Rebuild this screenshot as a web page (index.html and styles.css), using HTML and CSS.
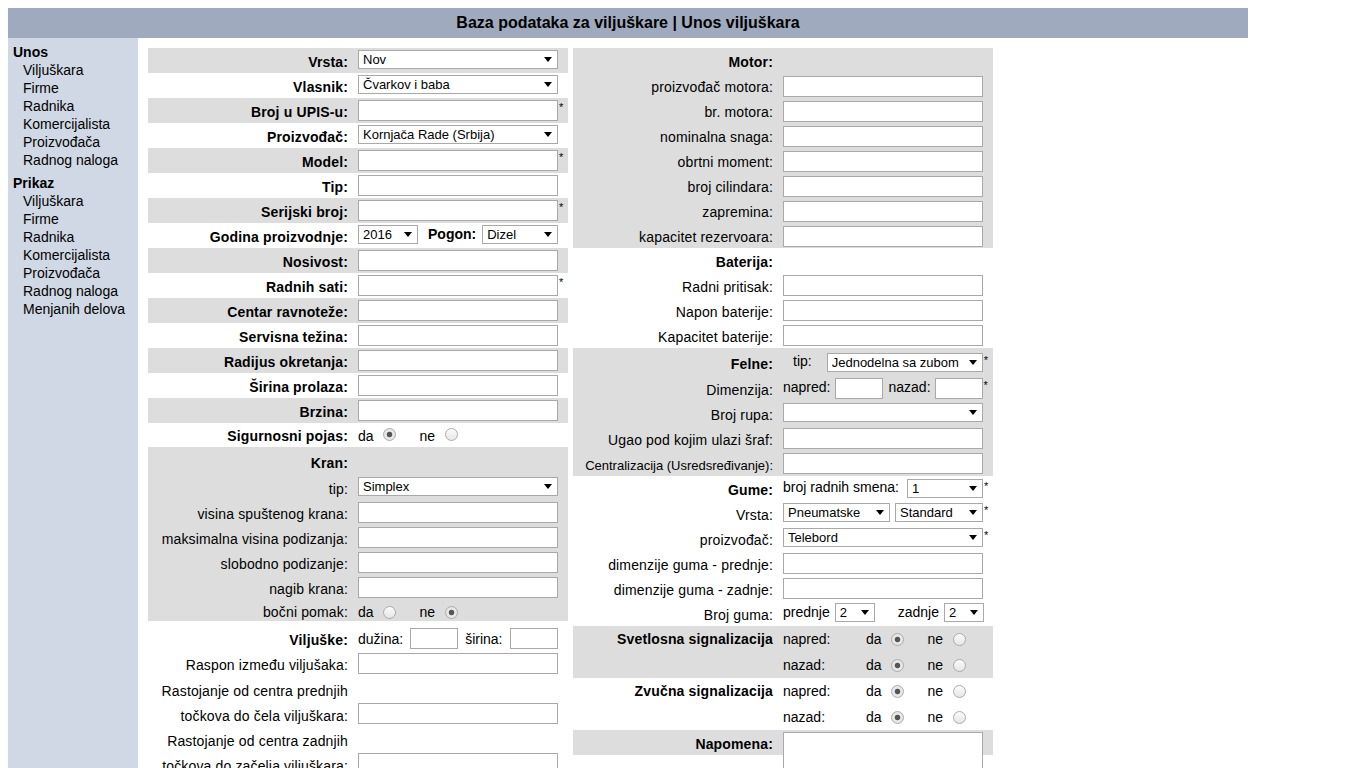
FILE: index.html
```html
<!DOCTYPE html>
<html lang="sr">
<head>
<meta charset="utf-8">
<title>Baza podataka za viljuškare | Unos viljuškara</title>
<link rel="stylesheet" href="styles.css">
</head>
<body>
<div class="page">
  <h1 class="title">Baza podataka za viljuškare | Unos viljuškara</h1>
  <div class="main">
    <nav class="side">
      <h3>Unos</h3>
      <ul>
        <li><a href="#">Viljuškara</a></li>
        <li><a href="#">Firme</a></li>
        <li><a href="#">Radnika</a></li>
        <li><a href="#">Komercijalista</a></li>
        <li><a href="#">Proizvođača</a></li>
        <li><a href="#">Radnog naloga</a></li>
      </ul>
      <h3>Prikaz</h3>
      <ul>
        <li><a href="#">Viljuškara</a></li>
        <li><a href="#">Firme</a></li>
        <li><a href="#">Radnika</a></li>
        <li><a href="#">Komercijalista</a></li>
        <li><a href="#">Proizvođača</a></li>
        <li><a href="#">Radnog naloga</a></li>
        <li><a href="#">Menjanih delova</a></li>
      </ul>
    </nav>
    <form class="content">
      <div class="col">
        <div class="row g"><div class="lb b">Vrsta:</div><div class="ct"><span class="sel w200"><select><option>Nov</option></select></span></div></div>
        <div class="row"><div class="lb b">Vlasnik:</div><div class="ct"><span class="sel w200"><select><option>Čvarkov i baba</option></select></span></div></div>
        <div class="row g"><div class="lb b">Broj u UPIS-u:</div><div class="ct"><input class="in" type="text"><span class="req">*</span></div></div>
        <div class="row"><div class="lb b">Proizvođač:</div><div class="ct"><span class="sel w200"><select><option>Kornjača Rade (Srbija)</option></select></span></div></div>
        <div class="row g"><div class="lb b">Model:</div><div class="ct"><input class="in" type="text"><span class="req">*</span></div></div>
        <div class="row"><div class="lb b">Tip:</div><div class="ct"><input class="in" type="text"></div></div>
        <div class="row g"><div class="lb b">Serijski broj:</div><div class="ct"><input class="in" type="text"><span class="req">*</span></div></div>
        <div class="row"><div class="lb b">Godina proizvodnje:</div><div class="ct"><span class="sel w60"><select><option>2016</option></select></span><span class="t b ml10">Pogon:</span><span class="sel w76 ml6"><select><option>Dizel</option></select></span></div></div>
        <div class="row g"><div class="lb b">Nosivost:</div><div class="ct"><input class="in" type="text"></div></div>
        <div class="row"><div class="lb b">Radnih sati:</div><div class="ct"><input class="in" type="text"><span class="req">*</span></div></div>
        <div class="row g"><div class="lb b">Centar ravnoteže:</div><div class="ct"><input class="in" type="text"></div></div>
        <div class="row"><div class="lb b">Servisna težina:</div><div class="ct"><input class="in" type="text"></div></div>
        <div class="row g"><div class="lb b">Radijus okretanja:</div><div class="ct"><input class="in" type="text"></div></div>
        <div class="row"><div class="lb b">Širina prolaza:</div><div class="ct"><input class="in" type="text"></div></div>
        <div class="row g"><div class="lb b">Brzina:</div><div class="ct"><input class="in" type="text"></div></div>
        <div class="row h24 rad"><div class="lb b">Sigurnosni pojas:</div><div class="ct"><span class="t">da</span><input class="rb" type="radio" name="pojas" checked><span class="t ne">ne</span><input class="rb rb2" type="radio" name="pojas"></div></div>

        <div class="grp g">
          <div class="row h28 kran"><div class="lb b">Kran:</div></div>
          <div class="row"><div class="lb">tip:</div><div class="ct"><span class="sel w200"><select><option>Simplex</option></select></span></div></div>
          <div class="row"><div class="lb">visina spuštenog krana:</div><div class="ct"><input class="in" type="text"></div></div>
          <div class="row"><div class="lb">maksimalna visina podizanja:</div><div class="ct"><input class="in" type="text"></div></div>
          <div class="row"><div class="lb">slobodno podizanje:</div><div class="ct"><input class="in" type="text"></div></div>
          <div class="row"><div class="lb">nagib krana:</div><div class="ct"><input class="in" type="text"></div></div>
          <div class="row h21 rad"><div class="lb">bočni pomak:</div><div class="ct"><span class="t">da</span><input class="rb" type="radio" name="pomak"><span class="t ne">ne</span><input class="rb rb2" type="radio" name="pomak" checked></div></div>
        </div>

        <div class="grp">
          <div class="row h30 vilj"><div class="lb b">Viljuške:</div><div class="ct"><span class="t">dužina:</span><input class="in w48 ml7" type="text"><span class="t ml7">širina:</span><input class="in w48 ml7" type="text"></div></div>
          <div class="row h27"><div class="lb">Raspon između viljušaka:</div><div class="ct"><input class="in" type="text"></div></div>
          <div class="row h50 two"><div class="lb">Rastojanje od centra prednjih<br>točkova do čela viljuškara:</div><div class="ct"><input class="in" type="text"></div></div>
          <div class="row h50 two"><div class="lb">Rastojanje od centra zadnjih<br>točkova do začelja viljuškara:</div><div class="ct"><input class="in" type="text"></div></div>
          <div class="row"><div class="lb">Debljina viljuški:</div><div class="ct"><input class="in" type="text"></div></div>
        </div>
        <div class="grp g">
          <div class="row"><div class="lb b">Dimenzije:</div></div>
          <div class="row"><div class="lb">dužina:</div><div class="ct"><input class="in" type="text"></div></div>
          <div class="row"><div class="lb">širina:</div><div class="ct"><input class="in" type="text"></div></div>
          <div class="row"><div class="lb">visina:</div><div class="ct"><input class="in" type="text"></div></div>
        </div>
      </div>

      <div class="col">
        <div class="grp g motor">
          <div class="row"><div class="lb b">Motor:</div></div>
          <div class="row"><div class="lb">proizvođač motora:</div><div class="ct"><input class="in" type="text"></div></div>
          <div class="row"><div class="lb">br. motora:</div><div class="ct"><input class="in" type="text"></div></div>
          <div class="row"><div class="lb">nominalna snaga:</div><div class="ct"><input class="in" type="text"></div></div>
          <div class="row"><div class="lb">obrtni moment:</div><div class="ct"><input class="in" type="text"></div></div>
          <div class="row"><div class="lb">broj cilindara:</div><div class="ct"><input class="in" type="text"></div></div>
          <div class="row"><div class="lb">zapremina:</div><div class="ct"><input class="in" type="text"></div></div>
          <div class="row"><div class="lb">kapacitet rezervoara:</div><div class="ct"><input class="in" type="text"></div></div>
        </div>
        <div class="grp">
          <div class="row"><div class="lb b">Baterija:</div></div>
          <div class="row"><div class="lb">Radni pritisak:</div><div class="ct"><input class="in" type="text"></div></div>
          <div class="row"><div class="lb">Napon baterije:</div><div class="ct"><input class="in" type="text"></div></div>
          <div class="row"><div class="lb">Kapacitet baterije:</div><div class="ct"><input class="in" type="text"></div></div>
        </div>
        <div class="grp g">
          <div class="row h28 felne"><div class="lb b">Felne:</div><div class="ct"><span class="t ml10">tip:</span><span class="sel w156 ml15"><select><option>Jednodelna sa zubom</option></select></span><span class="req">*</span></div></div>
          <div class="row"><div class="lb">Dimenzija:</div><div class="ct"><span class="t">napred:</span><input class="in w48 ml5" type="text"><span class="t ml5">nazad:</span><input class="in w48 ml4" type="text"><span class="req">*</span></div></div>
          <div class="row"><div class="lb">Broj rupa:</div><div class="ct"><span class="sel w200"><select><option></option></select></span></div></div>
          <div class="row"><div class="lb">Ugao pod kojim ulazi šraf:</div><div class="ct"><input class="in" type="text"></div></div>
          <div class="row"><div class="lb sm">Centralizacija (Usredsređivanje):</div><div class="ct"><input class="in" type="text"></div></div>
        </div>
        <div class="grp">
          <div class="row gume"><div class="lb b">Gume:</div><div class="ct"><span class="t">broj radnih smena:</span><span class="sel w76 ml8"><select><option>1</option></select></span><span class="req">*</span></div></div>
          <div class="row"><div class="lb">Vrsta:</div><div class="ct"><span class="sel w107"><select><option>Pneumatske</option></select></span><span class="sel w88 ml5"><select><option>Standard</option></select></span><span class="req">*</span></div></div>
          <div class="row"><div class="lb">proizvođač:</div><div class="ct"><span class="sel w200"><select><option>Telebord</option></select></span><span class="req">*</span></div></div>
          <div class="row"><div class="lb">dimenzije guma - prednje:</div><div class="ct"><input class="in" type="text"></div></div>
          <div class="row"><div class="lb">dimenzije guma - zadnje:</div><div class="ct"><input class="in" type="text"></div></div>
          <div class="row"><div class="lb">Broj guma:</div><div class="ct"><span class="t">prednje</span><span class="sel w40 ml5"><select><option>2</option></select></span><span class="t ml23">zadnje</span><span class="sel w40 ml5"><select><option>2</option></select></span></div></div>
        </div>
        <div class="grp g">
          <div class="row h26 rad2"><div class="lb b">Svetlosna signalizacija</div><div class="ct"><span class="t k">napred:</span><span class="t">da</span><input class="rb" type="radio" name="sv1" checked><span class="t ne">ne</span><input class="rb rb2" type="radio" name="sv1"></div></div>
          <div class="row h26 rad2"><div class="lb"></div><div class="ct"><span class="t k">nazad:</span><span class="t">da</span><input class="rb" type="radio" name="sv2" checked><span class="t ne">ne</span><input class="rb rb2" type="radio" name="sv2"></div></div>
        </div>
        <div class="grp">
          <div class="row h26 rad2"><div class="lb b">Zvučna signalizacija</div><div class="ct"><span class="t k">napred:</span><span class="t">da</span><input class="rb" type="radio" name="zv1" checked><span class="t ne">ne</span><input class="rb rb2" type="radio" name="zv1"></div></div>
          <div class="row h26 rad2"><div class="lb"></div><div class="ct"><span class="t k">nazad:</span><span class="t">da</span><input class="rb" type="radio" name="zv2" checked><span class="t ne">ne</span><input class="rb rb2" type="radio" name="zv2"></div></div>
        </div>
        <div class="grp g">
          <div class="row napomena"><div class="lb b">Napomena:</div><div class="ct"><textarea class="ta"></textarea></div></div>
        </div>
      </div>
    </form>
  </div>
</div>
</body>
</html>
```

FILE: styles.css
```css
* { box-sizing: border-box; }

html::-webkit-scrollbar { width: 17px; background: #f1f1f1; }
html::-webkit-scrollbar-thumb { background: #c1c1c1; border: 2px solid #f1f1f1; border-top-width: 0; border-bottom-width: 0; }
html::-webkit-scrollbar-button:single-button { height: 17px; background: #f1f1f1; display: block; }

body {
  margin: 8px;
  font-family: "Liberation Sans", Arial, sans-serif;
  font-size: 14px;
  color: #000;
  background: #fff;
}

.page { width: 1240px; }

.title {
  margin: 0;
  height: 30px;
  line-height: 29px;
  background: #a0aabf;
  text-align: center;
  font-size: 16px;
  font-weight: bold;
}

.main { display: flex; align-items: stretch; }

.side {
  width: 130px;
  flex: none;
  background: #d0d8e5;
  padding-top: 5px;
  line-height: 18px;
}
.side h3 { margin: 0; padding-left: 5px; font-size: 14px; font-weight: bold; }
.side ul { list-style: none; margin: 0 0 5px; padding: 0 0 0 15px; }
.side a { color: #000; text-decoration: none; }

.content {
  flex: 1;
  display: flex;
  align-items: flex-start;
  gap: 5px;
  padding: 10px;
  min-height: 1244px;
}

.col { width: 420px; flex: none; }

.g { background: #dddddd; }

.row { display: flex; height: 25px; }
.h21 { height: 21px; }
.h24 { height: 24px; }
.h26 { height: 26px; }
.h27 { height: 27px; }
.h28 { height: 28px; }
.h30 { height: 30px; }
.h50 { height: 50px; }

.lb {
  width: 205px;
  flex: none;
  text-align: right;
  padding: 4px 5px 0 0;
  line-height: 21px;
  white-space: nowrap;
  letter-spacing: 0.15px;
}
.lb.sm { font-size: 13px; letter-spacing: 0; }
.b { font-weight: bold; }

.ct {
  margin-left: 5px;
  display: flex;
  align-items: flex-start;
  padding-top: 2px;
  white-space: nowrap;
}
.motor .ct { padding-top: 3px; }

.t { line-height: 19px; }

.in {
  width: 200px;
  height: 21px;
  margin: 0;
  padding: 1px 3px;
  border: 1px solid #a9a9a9;
  background: #fff;
  font: 13px "Liberation Sans", Arial, sans-serif;
  flex: none;
}
.w48 { width: 48px; }

.ta {
  width: 200px;
  height: 80px;
  margin: 0;
  border: 1px solid #a9a9a9;
  background: #fff;
  font: 13px "Liberation Sans", Arial, sans-serif;
  resize: none;
}

.sel {
  position: relative;
  display: block;
  flex: none;
  height: 19px;
}
.sel select {
  -webkit-appearance: none;
  appearance: none;
  display: block;
  width: 100%;
  height: 19px;
  margin: 0;
  padding: 0 18px 0 4px;
  border: 1px solid #a9a9a9;
  border-radius: 0;
  background: #fff;
  color: #000;
  font: 13px "Liberation Sans", Arial, sans-serif;
  line-height: 17px;
}
.sel::after {
  content: "";
  position: absolute;
  right: 6px;
  top: 7px;
  border-left: 4px solid transparent;
  border-right: 4px solid transparent;
  border-top: 5px solid #000;
  pointer-events: none;
}
.w40 { width: 40px; }
.w60 { width: 60px; }
.w76 { width: 76px; }
.w88 { width: 88px; }
.w107 { width: 107px; }
.w156 { width: 156px; }
.w200 { width: 200px; }

.ml4 { margin-left: 4px; }
.ml5 { margin-left: 5px; }
.ml6 { margin-left: 6px; }
.ml7 { margin-left: 7px; }
.ml8 { margin-left: 8px; }
.ml10 { margin-left: 10px; }
.ml15 { margin-left: 15px; }
.ml23 { margin-left: 23px; }

.req {
  font-size: 11px;
  line-height: 11px;
  margin: 2px 0 0 1px;
}

.rb {
  -webkit-appearance: none;
  appearance: none;
  flex: none;
  width: 13px;
  height: 13px;
  margin: 3px 0 0 9px;
  border: 1px solid #ababab;
  border-radius: 50%;
  background: linear-gradient(#fbfbfb, #e6e6e6);
}
.rb:checked {
  background: radial-gradient(circle, #555 0, #555 2.4px, #e9e9e9 3.2px, #e2e2e2 100%);
}
.rb2 { margin-left: 10px; }
.ne { margin-left: 24px; }

/* radio rows */
.rad .lb { padding-top: 2px; line-height: 22px; }
.rad .t { line-height: 22px; }
.h21.rad .lb { padding-top: 1px; }
.h21.rad .ct { padding-top: 1px; }
.h21.rad .rb { margin-top: 5px; }

.rad2 .lb { padding-top: 2px; line-height: 23px; }
.rad2 .t { line-height: 23px; }
.rad2 .rb { margin-top: 5px; }
.k { width: 83px; flex: none; }

/* special rows */
.kran .lb { padding-top: 6px; }
.vilj .lb { padding-top: 8px; line-height: 23px; }
.vilj .ct { padding-top: 7px; }
.vilj .t { line-height: 23px; }
.two .lb { padding-top: 1px; line-height: 25px; }
.two .ct { padding-top: 25px; }
.felne .lb { padding-top: 5px; line-height: 23px; }
.felne .ct { padding-top: 4px; }
.felne .sel { margin-top: 1px; }
.felne .req { margin-top: 3px; }
.gume .ct { padding-top: 3px; }
.gume .t { line-height: 17px; }
.napomena .lb { padding-top: 3px; line-height: 23px; }
```
